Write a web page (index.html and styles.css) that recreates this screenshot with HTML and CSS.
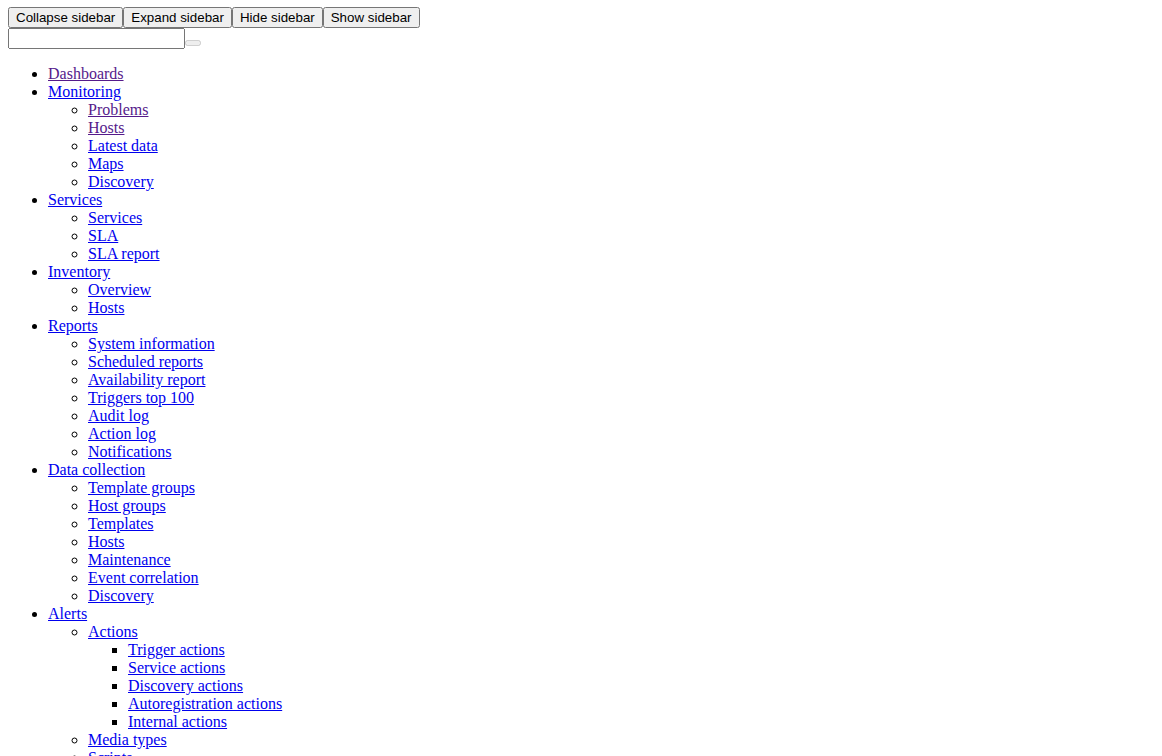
FILE: index.html
```html
<!DOCTYPE html>
<html>
<head>
<meta charset="utf-8">
<title>Sidebar</title>
<link rel="stylesheet" href="styles.css">
</head>
<body class="page">
<div class="controls">
<button class="btn" type="button">Collapse sidebar</button><button class="btn" type="button">Expand sidebar</button><button class="btn" type="button">Hide sidebar</button><button class="btn" type="button">Show sidebar</button>
</div>
<form class="search"><input class="search-input" type="text"><button class="search-btn" type="button" disabled></button></form>
<ul class="menu">
<li><a class="link visited" href="#">Dashboards</a></li>
<li><a class="link" href="#">Monitoring</a>
<ul class="submenu">
<li><a class="link visited" href="#">Problems</a></li>
<li><a class="link visited" href="#">Hosts</a></li>
<li><a class="link" href="#">Latest data</a></li>
<li><a class="link" href="#">Maps</a></li>
<li><a class="link" href="#">Discovery</a></li>
</ul></li>
<li><a class="link" href="#">Services</a>
<ul class="submenu">
<li><a class="link" href="#">Services</a></li>
<li><a class="link" href="#">SLA</a></li>
<li><a class="link" href="#">SLA report</a></li>
</ul></li>
<li><a class="link" href="#">Inventory</a>
<ul class="submenu">
<li><a class="link" href="#">Overview</a></li>
<li><a class="link" href="#">Hosts</a></li>
</ul></li>
<li><a class="link" href="#">Reports</a>
<ul class="submenu">
<li><a class="link" href="#">System information</a></li>
<li><a class="link" href="#">Scheduled reports</a></li>
<li><a class="link" href="#">Availability report</a></li>
<li><a class="link" href="#">Triggers top 100</a></li>
<li><a class="link" href="#">Audit log</a></li>
<li><a class="link" href="#">Action log</a></li>
<li><a class="link" href="#">Notifications</a></li>
</ul></li>
<li><a class="link" href="#">Data collection</a>
<ul class="submenu">
<li><a class="link" href="#">Template groups</a></li>
<li><a class="link" href="#">Host groups</a></li>
<li><a class="link" href="#">Templates</a></li>
<li><a class="link" href="#">Hosts</a></li>
<li><a class="link" href="#">Maintenance</a></li>
<li><a class="link" href="#">Event correlation</a></li>
<li><a class="link" href="#">Discovery</a></li>
</ul></li>
<li><a class="link" href="#">Alerts</a>
<ul class="submenu">
<li><a class="link" href="#">Actions</a>
<ul class="subsubmenu">
<li><a class="link" href="#">Trigger actions</a></li>
<li><a class="link" href="#">Service actions</a></li>
<li><a class="link" href="#">Discovery actions</a></li>
<li><a class="link" href="#">Autoregistration actions</a></li>
<li><a class="link" href="#">Internal actions</a></li>
</ul></li>
<li><a class="link" href="#">Media types</a></li>
<li><a class="link" href="#">Scripts</a></li>
</ul></li>
<li><a class="link" href="#">Users</a>
<ul class="submenu">
<li><a class="link" href="#">User groups</a></li>
<li><a class="link" href="#">User roles</a></li>
<li><a class="link" href="#">Users</a></li>
<li><a class="link" href="#">API tokens</a></li>
<li><a class="link" href="#">Authentication</a></li>
</ul></li>
<li><a class="link" href="#">Administration</a>
<ul class="submenu">
<li><a class="link" href="#">General</a></li>
<li><a class="link" href="#">Audit log</a></li>
<li><a class="link" href="#">Housekeeping</a></li>
<li><a class="link" href="#">Proxies</a></li>
<li><a class="link" href="#">Macros</a></li>
<li><a class="link" href="#">Queue</a></li>
</ul></li>
</ul>
</body>
</html>
```

FILE: styles.css
```css
.page {
  margin: 7px 8px 8px 8px;
  font-family: "Liberation Serif", "Times New Roman", serif;
  font-size: 16px;
  color: #000;
  background: #fff;
}
.controls {
  display: block;
}
.btn,
.search-input,
.search-btn {
  font-family: "Liberation Sans", Arial, sans-serif;
  font-size: 13.3333px;
}
.search {
  margin: 0;
}
.search-input {
  width: 177px;
  box-sizing: border-box;
}
.menu {
  list-style-type: disc;
  margin: 16px 0;
  padding-left: 40px;
}
.submenu {
  list-style-type: circle;
  margin: 0;
  padding-left: 40px;
}
.subsubmenu {
  list-style-type: square;
  margin: 0;
  padding-left: 40px;
}
.link {
  color: #0000ee;
  text-decoration: underline;
}
.link.visited {
  color: #551a8b;
}
```
